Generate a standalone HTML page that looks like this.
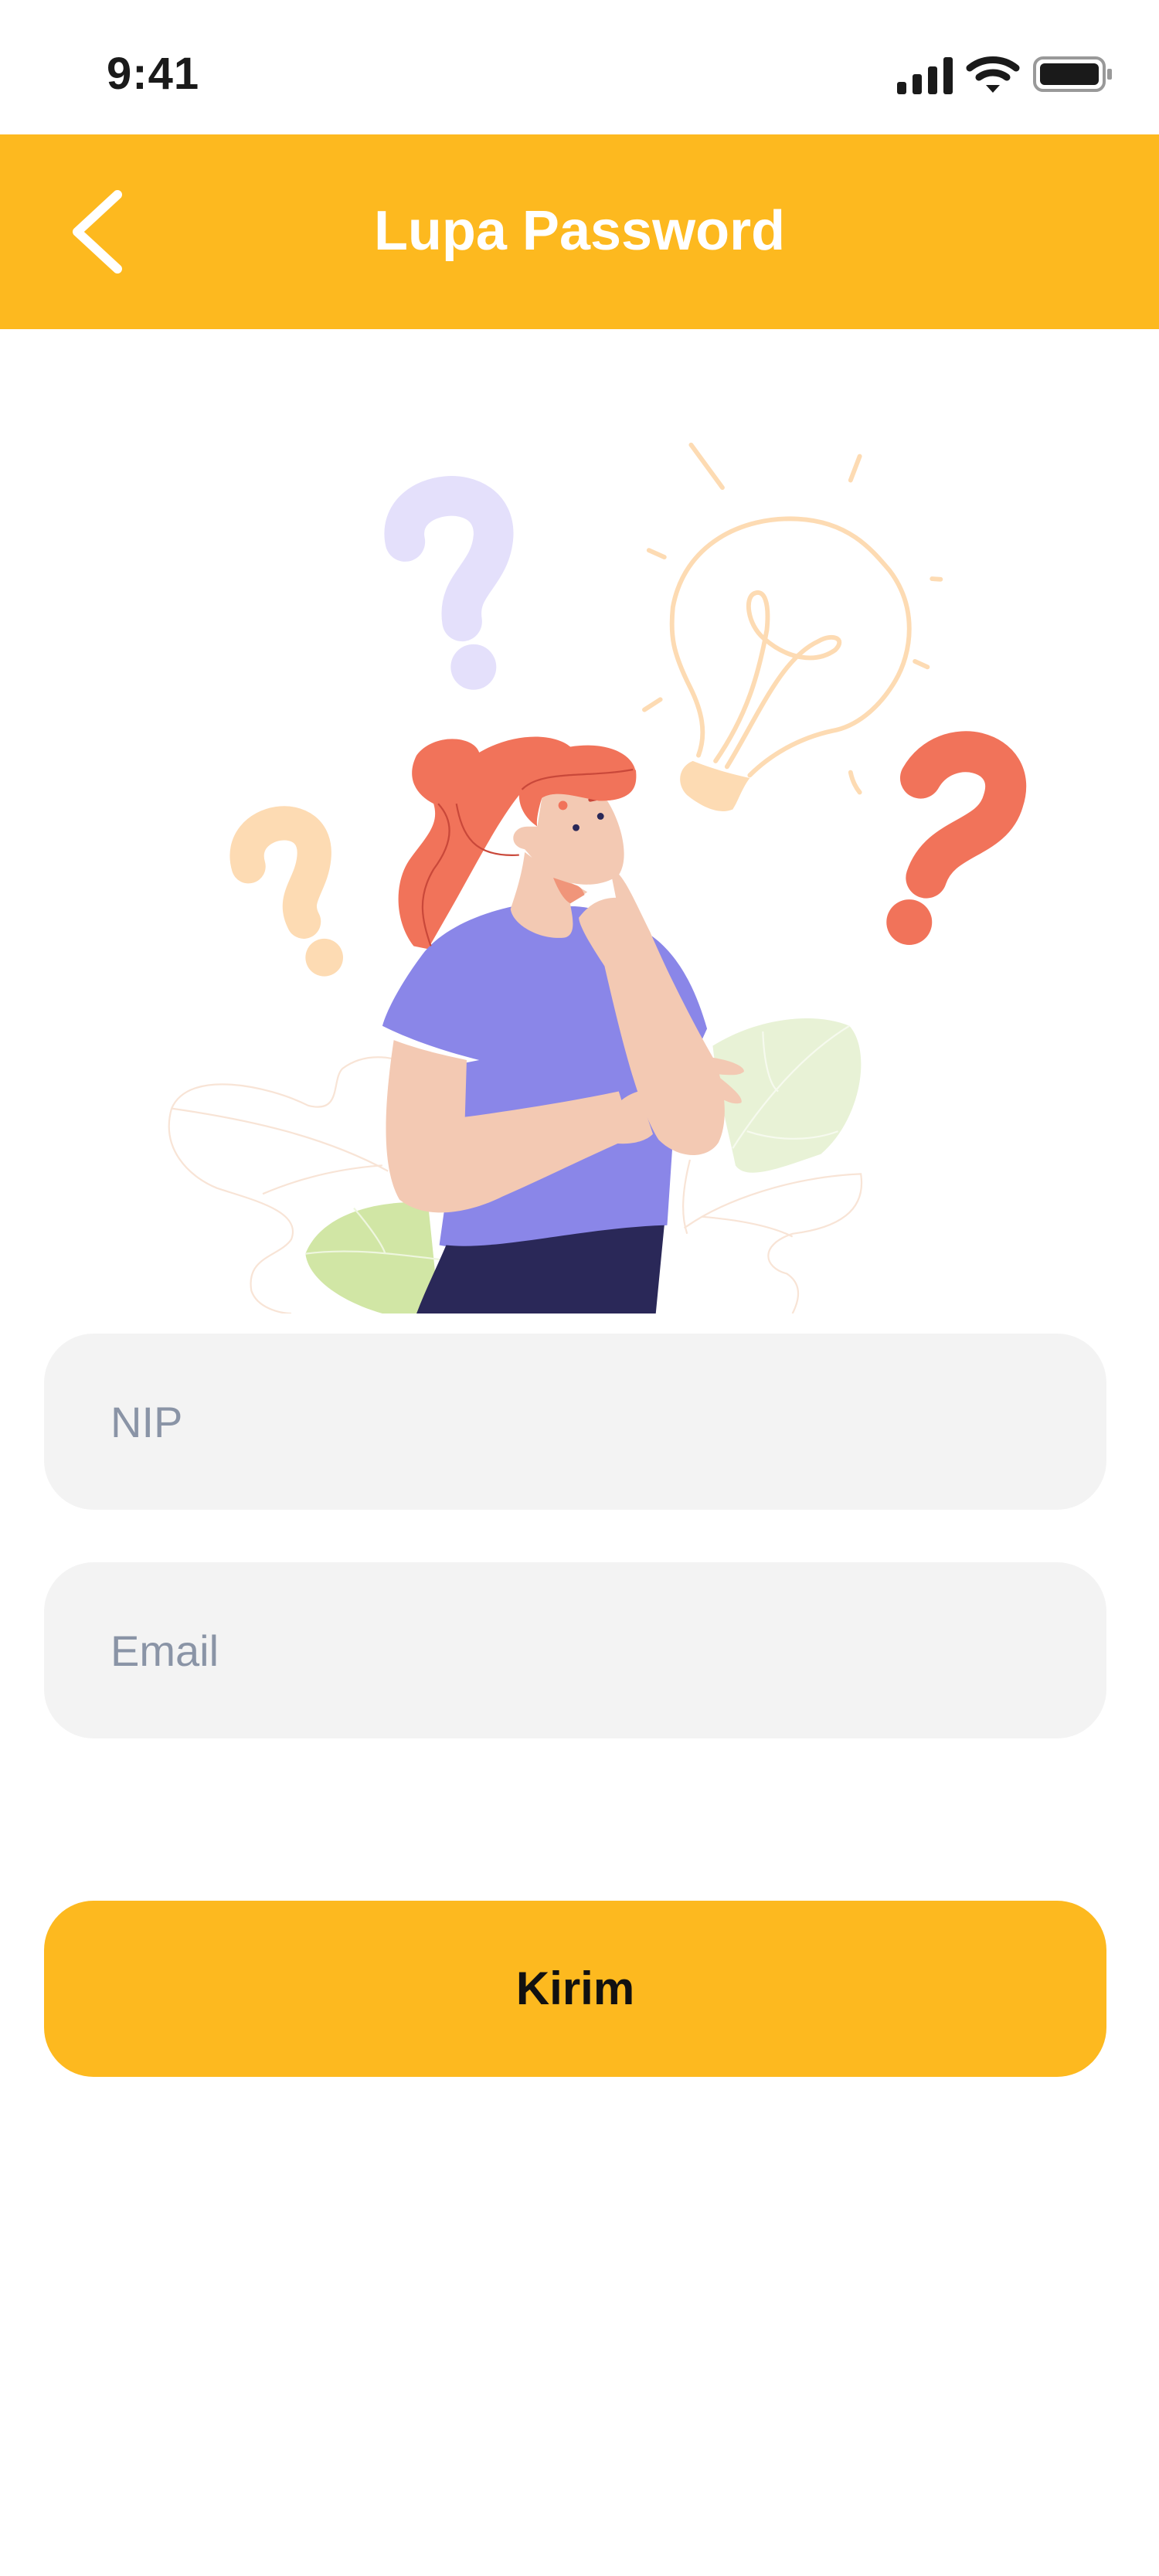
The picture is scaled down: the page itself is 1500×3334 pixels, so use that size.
<!DOCTYPE html>
<html><head><meta charset="utf-8">
<style>
html,body{margin:0;padding:0;background:#fff;}
body{width:1500px;height:3334px;position:relative;overflow:hidden;font-family:"Liberation Sans",sans-serif;}
.abs{position:absolute;}
.time{left:138px;top:62px;font-size:58px;font-weight:bold;color:#1a1a1a;letter-spacing:1px;}
.header{left:0;top:174px;width:1500px;height:252px;background:#FDB91F;}
.title{left:0;width:1500px;top:258px;text-align:center;color:#fff;font-size:72px;font-weight:bold;}
.field{left:57px;width:1375px;height:228px;border-radius:64px;background:#F3F3F3;}
.ph{left:143px;font-size:56px;color:#8A94A6;}
.btn{left:57px;top:2460px;width:1375px;height:228px;border-radius:64px;background:#FDB91F;text-align:center;line-height:228px;font-size:60px;font-weight:bold;color:#111;}
</style></head><body>
<div class="abs time">9:41</div>
<svg class="abs" style="left:1155px;top:66px" width="290" height="60" viewBox="0 0 290 60">
 <rect x="6" y="40" width="12" height="16" rx="3" fill="#1a1a1a"/>
 <rect x="26" y="30" width="12" height="26" rx="3" fill="#1a1a1a"/>
 <rect x="46" y="20" width="12" height="36" rx="3" fill="#1a1a1a"/>
 <rect x="66" y="8" width="12" height="48" rx="3" fill="#1a1a1a"/>
 <path d="M100 22 A48 48 0 0 1 160 22" stroke="#1a1a1a" stroke-width="9" fill="none" stroke-linecap="round"/>
 <path d="M112 34 A30 30 0 0 1 148 34" stroke="#1a1a1a" stroke-width="9" fill="none" stroke-linecap="round"/>
 <path d="M121 44 L130 54 L139 44 Z" fill="#1a1a1a"/>
 <rect x="184" y="9" width="90" height="42" rx="11" fill="none" stroke="#999" stroke-width="4"/>
 <rect x="191" y="16" width="76" height="28" rx="6" fill="#1a1a1a"/>
 <rect x="278" y="23" width="6" height="14" rx="2" fill="#999"/>
</svg>
<div class="abs header"></div>
<svg class="abs" style="left:86px;top:244px" width="80" height="112" viewBox="0 0 80 112">
 <path d="M66 8 L14 56 L66 104" stroke="#fff" stroke-width="12" fill="none" stroke-linecap="round" stroke-linejoin="round"/>
</svg>
<div class="abs title">Lupa Password</div>

<svg class="abs" style="left:200px;top:550px" width="1150" height="1150" viewBox="0 0 1560 1560">
 <g fill="none" stroke="#F8E4D6" stroke-width="3">
  <path d="M30 1200 C60 1130 200 1160 270 1195 C330 1210 310 1150 330 1130 C370 1100 420 1110 440 1120"/>
  <path d="M30 1200 C10 1270 60 1320 110 1340 C170 1360 260 1380 240 1430 C220 1460 160 1460 170 1520 C180 1550 220 1560 240 1560"/>
  <path d="M30 1200 C170 1220 300 1250 410 1310"/>
  <path d="M190 1350 C260 1320 330 1305 400 1300"/>
  <path d="M930 1410 C1000 1360 1120 1320 1240 1315 C1250 1380 1200 1410 1120 1420 C1060 1440 1070 1480 1110 1490 C1140 1510 1130 1540 1120 1560"/>
  <path d="M940 1290 C925 1350 925 1390 935 1420"/>
  <path d="M960 1390 C1020 1395 1080 1405 1120 1425"/>
 </g>
 <path d="M265 1455 C290 1390 380 1360 480 1365 L500 1560 L400 1560 C330 1540 270 1500 265 1455 Z" fill="#D1E6A5"/>
 <path d="M265 1455 C340 1445 420 1455 500 1465 M350 1375 C380 1410 400 1440 405 1455" stroke="#EEF6DE" stroke-width="3" fill="none"/>
 <path d="M980 1090 C1060 1040 1160 1030 1220 1055 C1260 1100 1240 1220 1170 1280 C1110 1300 1040 1330 1020 1300 C1010 1250 990 1180 980 1090 Z" fill="#E8F2D6"/>
 <path d="M1220 1055 C1130 1110 1060 1200 1015 1270 M1068 1065 C1070 1120 1080 1160 1095 1170 M1040 1240 C1100 1260 1160 1255 1200 1240" stroke="#F6FAEE" stroke-width="3" fill="none"/>
 <path d="M440 205 C420 110 600 90 595 195 C590 265 530 280 540 345" stroke="#E4E0FB" stroke-width="70" fill="none" stroke-linecap="round"/>
 <circle cx="560" cy="425" r="40" fill="#E4E0FB"/>
 <path d="M165 775 C140 690 290 665 280 760 C275 810 240 830 262 872" stroke="#FDDBB3" stroke-width="60" fill="none" stroke-linecap="round"/>
 <circle cx="298" cy="935" r="33" fill="#FDDBB3"/>
 <path d="M1345 620 C1390 540 1520 570 1490 660 C1470 730 1380 720 1355 795" stroke="#F1735A" stroke-width="72" fill="none" stroke-linecap="round"/>
 <circle cx="1325" cy="873" r="40" fill="#F1735A"/>
 <g fill="none" stroke="#FDDBB3" stroke-width="8" stroke-linecap="round">
  <path d="M955 580 C970 540 960 500 940 460 C910 400 905 370 910 320 C930 210 1030 160 1130 165 C1220 170 1260 220 1290 255 C1340 320 1330 400 1300 450 C1270 500 1230 530 1190 537 C1130 550 1080 580 1045 615"/>
  <path d="M985 590 C1040 510 1060 440 1075 360 C1080 310 1070 290 1055 295 C1035 300 1040 350 1070 375 C1110 410 1160 420 1195 395 C1215 375 1190 365 1165 380 C1100 410 1060 510 1005 600"/>
  <path d="M942 35 L997 110 M1238 55 L1222 97 M868 220 L895 232 M1365 270 L1380 271 M1335 415 L1357 425 M860 500 L888 482 M1222 610 C1225 625 1230 635 1238 645"/>
 </g>
 <path d="M945 590 C920 600 915 630 935 650 C960 670 990 685 1015 675 C1025 660 1030 640 1045 620 C1000 610 970 600 945 590 Z" fill="#FDDBB3"/>
 <path d="M460 580 C490 540 560 545 570 575 C630 540 700 540 730 565 C790 555 840 575 845 610 C850 650 820 660 780 660 L640 650 C600 700 560 780 520 850 L480 920 L455 915 C420 870 420 800 450 760 C480 720 500 700 490 665 C460 650 440 620 460 580 Z" fill="#F1735A"/>
 <path d="M630 845 C560 860 500 890 470 930 C440 970 410 1020 400 1055 C450 1080 510 1100 570 1115 L545 1120 L500 1440 C600 1460 720 1420 900 1405 L915 1180 L970 1060 C950 990 920 930 870 895 C820 860 770 845 730 845 Z" fill="#8A86E8"/>
 <path d="M512 1440 C600 1450 750 1410 895 1405 L880 1560 L460 1560 C475 1520 495 1480 512 1440 Z" fill="#2A2858"/>
 <path d="M420 1080 C405 1180 395 1300 430 1360 C480 1400 560 1380 610 1355 C690 1320 780 1275 840 1250 L815 1170 C720 1190 620 1205 545 1215 L548 1115 C500 1105 460 1095 420 1080 Z" fill="#F3C9B3"/>
 <path d="M650 750 C645 790 635 820 625 850 C630 880 680 905 720 900 C745 895 730 850 730 840 L760 820 L690 780 Z" fill="#F3C9B3"/>
 <path d="M680 655 C700 640 760 650 795 660 C820 700 835 760 815 790 C790 810 740 815 695 790 C670 770 655 750 650 745 C620 740 625 705 655 705 L672 705 Z" fill="#F3C9B3"/>
 <path d="M700 795 C710 820 720 835 730 840 L755 825 C750 812 745 810 740 808 Z" fill="#F0957A"/>
 <circle cx="740" cy="707" r="6" fill="#2A2858"/><circle cx="783" cy="687" r="6" fill="#2A2858"/>
 <circle cx="717" cy="668" r="8" fill="#F1735A"/>
 <path d="M765 658 L780 655" stroke="#C9483A" stroke-width="7" stroke-linecap="round"/>
 <path d="M640 650 C635 610 680 600 740 610 C800 620 840 615 845 605 C850 650 820 660 780 660 C740 652 700 640 680 655 C672 680 670 700 672 705 C650 690 640 670 640 650 Z" fill="#F1735A"/>
 <path d="M645 640 C680 605 760 620 840 605 M530 665 C540 720 560 760 640 755 M498 665 C530 700 520 740 490 780 C460 830 470 870 485 915" stroke="#C9483A" stroke-width="3" fill="none"/>
 <path d="M800 780 C820 780 840 830 870 890 C900 960 940 1040 980 1110 C1000 1150 1010 1220 990 1260 C970 1290 920 1290 885 1255 C850 1200 820 1080 790 950 C770 920 745 880 745 865 C760 845 780 830 810 830 Z" fill="#F3C9B3"/>
 <path d="M975 1110 C1010 1115 1035 1125 1035 1135 C1025 1145 1000 1140 985 1140 C1010 1160 1035 1180 1030 1190 C1015 1195 1000 1185 990 1180 Z" fill="#F3C9B3"/>
 <path d="M800 1260 C830 1265 860 1260 875 1245 L850 1170 C830 1175 810 1190 800 1210 Z" fill="#F3C9B3"/>
</svg>

<div class="abs field" style="top:1726px"></div>
<div class="abs ph" style="top:1808px">NIP</div>
<div class="abs field" style="top:2022px"></div>
<div class="abs ph" style="top:2104px">Email</div>
<div class="abs btn">Kirim</div>
</body></html>
